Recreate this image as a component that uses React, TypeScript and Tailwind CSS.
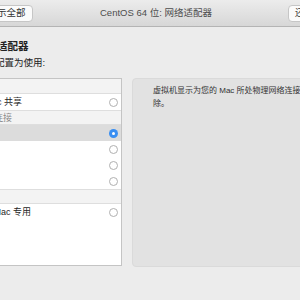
export default function App() {
  const font = { fontFamily: '"Liberation Sans", "Noto Sans CJK SC", sans-serif' };

  return (
    <div className="w-[300px] h-[300px] overflow-hidden bg-[#ececec] text-[#222]" style={font}>
      {/* 工具栏 */}
      <div className="h-[27px] flex items-center border-b border-[#b4b4b4] bg-gradient-to-b from-[#ececec] to-[#d7d7d7]">
        <div className="-ml-[20px] w-[53px] h-[17px] shrink-0 flex items-center justify-center rounded-[4px] border border-[#c6c6c6] bg-[#fbfbfb] text-[9.5px] text-[#333]">
          显示全部
        </div>
        <div className="ml-[67px] text-[9.5px] text-[#4d4d4d] whitespace-nowrap">CentOS 64 位: 网络适配器</div>
        <div className="ml-auto -mr-[30px] w-[42px] h-[17px] shrink-0 flex items-center pl-[6px] rounded-[4px] border border-[#c6c6c6] bg-[#fbfbfb] text-[9.5px] text-[#333]">
          还原
        </div>
      </div>

      {/* 主内容 */}
      <div className="flex -ml-[52px]">
        <div className="w-[174px] shrink-0">
          <div className="pt-[13px] pl-[28px] text-[10.5px] leading-[13px] font-semibold text-[#222] whitespace-nowrap">网络适配器</div>
          <div className="pt-[4px] pl-[28px] text-[9.5px] leading-[12px] text-[#222] whitespace-nowrap">将其配置为使用:</div>

          {/* 列表 */}
          <div className="mt-[9px] h-[188px] border border-[#c4c4c4] bg-white text-[9px] leading-[14px] text-[#262626]">
            <Header label="共享" first />
            <Row label="与我的 Mac 共享" />
            <Header label="桥接网络连接" />
            <Row label="自动检测" selected />
            <Row label="以太网" />
            <Row label="Wi-Fi" />
            <Row label="蓝牙 PAN" />
            <Header label="自定义" />
            <Row label="仅限我的 Mac 专用" />
          </div>
        </div>

        {/* 说明面板 */}
        <div className="ml-[10px] mt-[51px] w-[200px] h-[189px] shrink-0 rounded-[4px] border border-[#dadada] bg-[#e2e2e2] pl-[20px] pt-[5px] text-[8px] leading-[13px] text-[#333] whitespace-nowrap">
          虚拟机显示为您的 Mac 所处物理网络连接上的一台独立设备，可能会被移
          <br />
          除。
        </div>
      </div>
    </div>
  );
}

function Header({ label, first }: { label: string; first?: boolean }) {
  return (
    <div
      className={
        'h-[15px] flex items-center pl-[9px] bg-[#f3f3f3] text-[#8a8a8a] border-b border-[#dedede] ' +
        (first ? '' : 'border-t')
      }
    >
      {label}
    </div>
  );
}

function Row({ label, selected }: { label: string; selected?: boolean }) {
  return (
    <div className={'h-[16px] flex items-center pl-[6px] pr-[3px] ' + (selected ? 'bg-[#dcdcdc]' : '')}>
      <span className="flex-1 whitespace-nowrap">{label}</span>
      {selected ? (
        <span className="w-[9px] h-[9px] rounded-full bg-[#3a8ff2] flex items-center justify-center">
          <span className="w-[3px] h-[3px] rounded-full bg-white" />
        </span>
      ) : (
        <span className="w-[9px] h-[9px] rounded-full border border-[#b0b0b0] bg-white" />
      )}
    </div>
  );
}
